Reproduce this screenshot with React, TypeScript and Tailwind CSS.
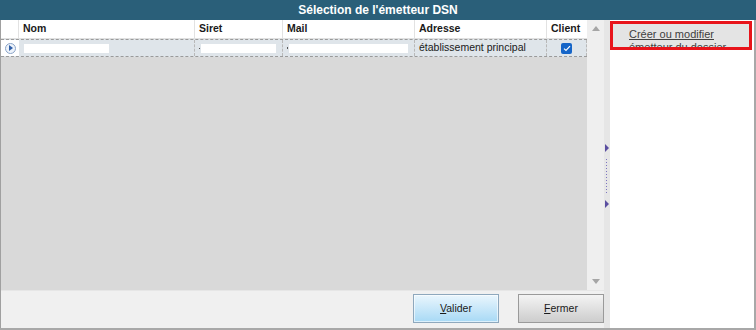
import React from "react";

const font = { fontFamily: '"Liberation Sans", Arial, sans-serif' };

const Checkbox: React.FC = () => (
  <span className="inline-flex h-[11px] w-[11px] items-center justify-center rounded-[2px] bg-[#1565c8]">
    <svg width="8" height="7" viewBox="0 0 8 7">
      <path d="M1 3.6 L3 5.5 L7 1.2" stroke="#fff" strokeWidth="1.2" fill="none" />
    </svg>
  </span>
);

const App: React.FC = () => {
  return (
    <div className="flex h-[330px] w-[756px] flex-col bg-white text-[#1a1a1a]" style={font}>
      {/* title bar */}
      <div className="flex h-[20px] items-center justify-center bg-[#2a5f79] text-[12px] font-bold text-white">
        Sélection de l'émetteur DSN
      </div>

      <div className="flex min-h-0 flex-1 border-b-2 border-r-2 border-[#a8a8a8]">
        {/* left part */}
        <div className="flex w-[604px] flex-col border-l border-[#a0a0a0]">
          <div className="flex h-[270px]">
            {/* grid */}
            <div className="flex w-[587px] flex-col bg-[#d9d9d9]">
              <div className="flex h-[19px] border-b border-[#e0e0e0] bg-white text-[10.5px] font-bold">
                <div className="w-[18px] border-r border-[#e2e2e2]" />
                <div className="flex w-[176px] items-center border-r border-[#e2e2e2] pl-[4px]">Nom</div>
                <div className="flex w-[88px] items-center border-r border-[#e2e2e2] pl-[4px]">Siret</div>
                <div className="flex w-[132px] items-center border-r border-[#e2e2e2] pl-[4px]">Mail</div>
                <div className="flex w-[132px] items-center border-r border-[#e2e2e2] pl-[4px]">Adresse</div>
                <div className="flex flex-1 items-center pl-[4px]">Client</div>
              </div>
              <div className="flex h-[18px] border-y border-dashed border-[#9a9a9a] bg-[#dfe5ea] text-[10.5px]">
                <div className="flex w-[18px] items-center justify-center bg-white">
                  <span className="flex h-[11px] w-[11px] items-center justify-center rounded-full border border-[#8aa4c8] bg-[#eef3fa]">
                    <span className="ml-[1px] h-0 w-0 border-y-[3px] border-l-[4px] border-y-transparent border-l-[#2f5fa8]" />
                  </span>
                </div>
                <div className="flex w-[176px] items-center border-r border-dashed border-[#b8b8b8] pl-[5px]">
                  <div className="h-[9px] w-[85px] bg-white" />
                </div>
                <div className="flex w-[88px] items-center border-r border-dashed border-[#b8b8b8] pl-[4px]">
                  <span className="mr-[1px] h-[1px] w-[1px] bg-[#555]" />
                  <div className="h-[9px] w-[75px] bg-white" />
                </div>
                <div className="flex w-[132px] items-center border-r border-dashed border-[#b8b8b8] pl-[4px]">
                  <span className="mr-[1px] h-[2px] w-[1px] bg-[#555]" />
                  <div className="h-[9px] w-[119px] bg-white" />
                </div>
                <div className="flex w-[132px] items-center border-r border-dashed border-[#b8b8b8] pl-[4px]">
                  établissement principal
                </div>
                <div className="flex flex-1 items-center justify-center border-r border-dashed border-[#b8b8b8]">
                  <Checkbox />
                </div>
              </div>
            </div>
            {/* scrollbar */}
            <div className="flex w-[17px] flex-col items-center justify-between bg-[#efefef] py-[6px]">
              <span className="h-0 w-0 border-x-[4px] border-b-[5px] border-x-transparent border-b-[#a6a6a6]" />
              <span className="h-0 w-0 border-x-[4px] border-t-[5px] border-x-transparent border-t-[#a6a6a6]" />
            </div>
          </div>
          {/* buttons */}
          <div className="flex flex-1 items-start justify-end gap-[19px] border-t border-[#e6e6e6] bg-[#f0f0f0] pt-[3px] text-[10.5px]">
            <button className="h-[29px] w-[86px] border border-[#8ea8bd] bg-gradient-to-b from-[#eaf6fd] to-[#a7d9f5] text-[#1a1a1a] shadow-[inset_0_0_0_1px_rgba(255,255,255,0.6)]">
              <span className="underline">V</span>alider
            </button>
            <button className="h-[29px] w-[86px] border border-[#9a9a9a] bg-gradient-to-b from-[#f4f4f4] to-[#cdcdcd] text-[#1a1a1a]">
              <span className="underline">F</span>ermer
            </button>
          </div>
        </div>

        {/* splitter */}
        <div className="flex w-[6px] flex-col items-center bg-[#e6e6e6] pt-[124px]">
          <span className="h-0 w-0 border-y-[4px] border-l-[4px] border-y-transparent border-l-[#5a4ea0]" />
          <div className="mt-[6px] h-[36px] w-[4px] bg-[radial-gradient(circle,#7d74c0_0.7px,transparent_0.9px)] bg-[length:3px_3px]" />
          <span className="mt-[6px] h-0 w-0 border-y-[4px] border-l-[4px] border-y-transparent border-l-[#5a4ea0]" />
        </div>

        {/* right panel */}
        <div className="flex-1 bg-white pt-[1px]">
          <div className="mr-[2px] h-[29px] overflow-hidden border-[3px] border-[#e8141b] bg-[#e4e4e4] pl-[16px] pt-[4px] text-[11px] leading-[13px] text-[#404040]">
            <span className="underline">Créer ou modifier</span>
            <br />
            <span className="underline">émetteur du dossier</span>
          </div>
        </div>
      </div>
    </div>
  );
};

export default App;
